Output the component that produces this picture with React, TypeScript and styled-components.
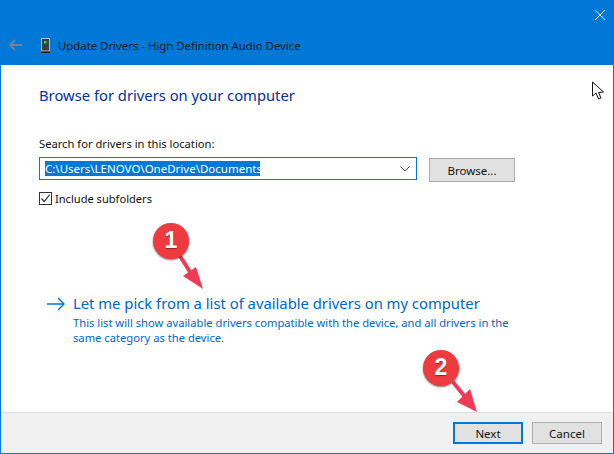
import styled, { createGlobalStyle } from "styled-components";

const Global = createGlobalStyle`
  html, body {
    margin: 0;
    padding: 0;
    background: #fff;
  }
  * {
    box-sizing: border-box;
  }
`;

const Window = styled.div`
  position: relative;
  width: 614px;
  height: 454px;
  display: flex;
  flex-direction: column;
  overflow: hidden;
  background: #fff;
  border: 1px solid #0078d7;
  border-top: 0;
  font-family: "Noto Sans", "Open Sans", sans-serif;
  font-size: 11.5px;
  color: #111;
`;

const TitleBar = styled.header`
  height: 65px;
  flex: none;
  margin: 0 -1px;
  background: #0078d7;
  display: flex;
  flex-direction: column;
`;

const CloseRow = styled.div`
  height: 30px;
  display: flex;
  justify-content: flex-end;
  padding: 10px 9px 0 0;
`;

const NavRow = styled.div`
  display: flex;
  align-items: center;
  height: 30px;
  padding-left: 9px;
`;

const DeviceIcon = styled.svg`
  margin-left: 19px;
  margin-right: 8px;
`;

const TitleText = styled.span`
  color: #0a1a2a;
  font-size: 11.37px;
`;

const Body = styled.main`
  flex: 1;
  display: flex;
  flex-direction: column;
  padding: 20px 0 0 38px;
`;

const Heading = styled.h1`
  margin: 0;
  font-size: 14.77px;
  line-height: 21px;
  font-weight: 400;
  color: #003399;
`;

const FieldLabel = styled.label`
  margin-top: 30px;
  font-size: 11.2px;
  line-height: 16px;
`;

const FieldRow = styled.div`
  display: flex;
  align-items: flex-start;
  margin-top: 5px;
`;

const Combo = styled.div`
  width: 378px;
  height: 23px;
  border: 1px solid #0078d7;
  display: flex;
  align-items: center;
  justify-content: space-between;
  padding: 0 6px 0 5px;
`;

const Selected = styled.span`
  background: #0078d7;
  color: #fff;
  line-height: 15px;
  height: 15px;
  width: 215px;
  white-space: nowrap;
`;

const Button = styled.button<{ $primary?: boolean }>`
  width: 70px;
  height: 22px;
  padding: 0;
  background: #e1e1e1;
  border: ${(p) => (p.$primary ? "2px solid #0078d7" : "1px solid #adadad")};
  font: inherit;
  color: #111;
`;

const BrowseButton = styled(Button)`
  width: 86px;
  height: 24px;
  margin: 1px 0 0 12px;
`;

const CheckRow = styled.div`
  display: flex;
  align-items: center;
  gap: 3px;
  margin-top: 9px;
  font-size: 11.1px;
`;

const CheckBox = styled.span`
  width: 13px;
  height: 13px;
  border: 1px solid #333;
  display: flex;
  align-items: center;
  justify-content: center;
`;

const LinkBlock = styled.section`
  display: flex;
  align-items: flex-start;
  margin: 87px 0 0 8px;
`;

const LinkArrow = styled.svg`
  margin: 4px 8px 0 0;
  flex: none;
`;

const LinkText = styled.div`
  display: flex;
  flex-direction: column;
`;

const LinkTitle = styled.div`
  font-size: 14.8px;
  line-height: 21px;
  color: #0066cc;
  white-space: nowrap;
`;

const LinkNote = styled.div`
  width: 445px;
  margin-top: 1px;
  font-size: 11.2px;
  line-height: 15px;
  color: #0066cc;
`;

const Footer = styled.footer`
  height: 41px;
  flex: none;
  background: #f0f0f0;
  border-top: 1px solid #dfdfdf;
  display: flex;
  justify-content: flex-end;
  gap: 9px;
  padding: 9px 11px 0 0;
`;

const Overlay = styled.svg`
  position: absolute;
  left: -1px;
  top: 0;
  pointer-events: none;
`;

const Badge = styled.div<{ $x: number; $y: number }>`
  position: absolute;
  left: ${(p) => p.$x - 19}px;
  top: ${(p) => p.$y - 18}px;
  width: 36px;
  height: 36px;
  border-radius: 50%;
  background: #ef3b3f;
  box-shadow: 0 1px 2px rgba(0, 0, 0, 0.55);
  color: #fff;
  font-family: "Liberation Sans", Arial, sans-serif;
  font-weight: 700;
  font-size: 23px;
  line-height: 35px;
  text-align: center;
  text-shadow: 0 1px 1px rgba(0, 0, 0, 0.4);
`;

const Cursor = styled.svg`
  position: absolute;
  left: 590px;
  top: 81px;
`;

const App = () => {
  return (
    <Window>
      <Global />
      <TitleBar>
        <CloseRow>
          <svg width="10" height="10" viewBox="0 0 10 10">
            <path d="M0 0L10 10M10 0L0 10" stroke="#fff" strokeWidth="1" />
          </svg>
        </CloseRow>
        <NavRow>
          <svg width="13" height="12" viewBox="0 0 13 12">
            <path d="M6 1L1 6L6 11M1 6H13" fill="none" stroke="#6f8499" strokeWidth="2" />
          </svg>
          <DeviceIcon width="9" height="15" viewBox="0 0 9 15">
            <rect x="0.5" y="0.5" width="8" height="12.5" fill="#3a3f44" stroke="#b4c0cc" />
            <rect x="3" y="3" width="2.5" height="2.5" fill="#27e04a" />
            <rect x="0" y="13.5" width="9" height="1.5" fill="#1c1f22" />
          </DeviceIcon>
          <TitleText>Update Drivers - High Definition Audio Device</TitleText>
        </NavRow>
      </TitleBar>

      <Body>
        <Heading>Browse for drivers on your computer</Heading>
        <FieldLabel>Search for drivers in this location:</FieldLabel>
        <FieldRow>
          <Combo>
            <Selected>C:\Users\LENOVO\OneDrive\Documents</Selected>
            <svg width="10" height="6" viewBox="0 0 10 6">
              <path d="M0.5 0.5L5 5L9.5 0.5" fill="none" stroke="#555" strokeWidth="1" />
            </svg>
          </Combo>
          <BrowseButton>Browse...</BrowseButton>
        </FieldRow>
        <CheckRow>
          <CheckBox>
            <svg width="11" height="11" viewBox="0 0 11 11">
              <path d="M1.5 5.5L4.2 8.5L9.5 1.8" fill="none" stroke="#333" strokeWidth="1.2" />
            </svg>
          </CheckBox>
          <span>Include subfolders</span>
        </CheckRow>
        <LinkBlock>
          <LinkArrow width="18" height="14" viewBox="0 0 18 14">
            <path d="M0 7H17M11 1L17 7L11 13" fill="none" stroke="#0078d7" strokeWidth="1.4" />
          </LinkArrow>
          <LinkText>
            <LinkTitle>Let me pick from a list of available drivers on my computer</LinkTitle>
            <LinkNote>
              This list will show available drivers compatible with the device, and all drivers in the same category as the device.
            </LinkNote>
          </LinkText>
        </LinkBlock>
      </Body>

      <Footer>
        <Button $primary>Next</Button>
        <Button>Cancel</Button>
      </Footer>

      <Overlay width="614" height="454" viewBox="0 0 614 454">
        <path d="M180 256L192 275" stroke="#ef3b55" strokeWidth="4" />
        <path d="M203 289L183 276L196 267Z" fill="#ef3b55" />
        <path d="M453 382L466 398" stroke="#ef3b55" strokeWidth="4" />
        <path d="M477 412L457 402L470 389Z" fill="#ef3b55" />
      </Overlay>
      <Badge $x={171} $y={241}>1</Badge>
      <Badge $x={441} $y={368}>2</Badge>

      <Cursor width="14" height="20" viewBox="0 0 14 20">
        <path d="M1.5 1V15L5 12L7.5 18L10 17L7.5 11.5L12.5 11Z" fill="#fff" stroke="#111" strokeWidth="1" />
      </Cursor>
    </Window>
  );
};

export default App;
